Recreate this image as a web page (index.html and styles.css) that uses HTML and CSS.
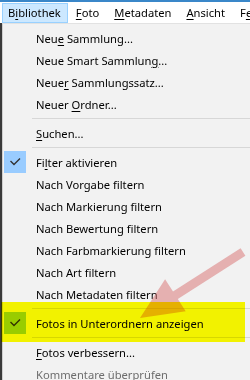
FILE: index.html
```html
<!DOCTYPE html>
<html lang="de">
<head>
    <meta charset="UTF-8">
    <meta name="viewport" content="width=device-width, initial-scale=1.0">
    <title>Bibliothek Menü</title>
    <link rel="stylesheet" href="styles.css">
</head>
<body>
    <div class="titlebar"></div>

    <div class="menubar">
        <div class="menubar-item active">B<u>i</u>bliothek</div>
        <div class="menubar-item"><u>F</u>oto</div>
        <div class="menubar-item"><u>M</u>etadaten</div>
        <div class="menubar-item"><u>A</u>nsicht</div>
        <div class="menubar-item">F<u>e</u></div>
    </div>

    <div class="dropdown">
        <div class="item"><span class="check"></span><span class="label">Neu<u>e</u> Sammlung...</span></div>
        <div class="item"><span class="check"></span><span class="label">Neue Smart Sammlun<u>g</u>...</span></div>
        <div class="item"><span class="check"></span><span class="label">Neue<u>r</u> Sammlungssatz...</span></div>
        <div class="item"><span class="check"></span><span class="label">Neuer <u>O</u>rdner...</span></div>
        <div class="separator"></div>
        <div class="item"><span class="check"></span><span class="label"><u>S</u>uchen...</span></div>
        <div class="separator"></div>
        <div class="item checked">
            <span class="check">
                <span class="check-box">
                    <svg width="22" height="22" viewBox="0 0 22 22"><path d="M6.5 10 L10 13.5 L16 7.5" fill="none" stroke="#333" stroke-width="1.4"/></svg>
                </span>
            </span>
            <span class="label">Fi<u>l</u>ter aktivieren</span>
        </div>
        <div class="item"><span class="check"></span><span class="label">Nach Vorgabe filtern</span></div>
        <div class="item"><span class="check"></span><span class="label">Nach Markierung filtern</span></div>
        <div class="item"><span class="check"></span><span class="label">Nach Bewertung filtern</span></div>
        <div class="item"><span class="check"></span><span class="label">Nach Farbmarkierung filtern</span></div>
        <div class="item"><span class="check"></span><span class="label">Nach Art filtern</span></div>
        <div class="item"><span class="check"></span><span class="label">Nach Metadaten filtern</span></div>
        <div class="separator"></div>
        <div class="item checked">
            <span class="check">
                <span class="check-box">
                    <svg width="22" height="22" viewBox="0 0 22 22"><path d="M6.5 10 L10 13.5 L16 7.5" fill="none" stroke="#333" stroke-width="1.4"/></svg>
                </span>
            </span>
            <span class="label">Fotos in Unterordnern anzeigen</span>
        </div>
        <div class="separator"></div>
        <div class="item"><span class="check"></span><span class="label"><u>F</u>otos verbessern...</span></div>
        <div class="item disabled"><span class="check"></span><span class="label">Kommentare überprüfen</span></div>
    </div>

    <!-- annotation drawn over the screenshot -->
    <svg class="arrow" width="250" height="380" viewBox="0 0 250 380">
        <polygon points="245.4,255.8 177.8,299.1 185.7,311.3 140,318 165.1,279.3 173,291.5 240.6,248.2" fill="rgba(215,110,110,0.5)"/>
    </svg>
    <div class="highlight"></div>
</body>
</html>
```

FILE: styles.css
```css
body {
    font-family: 'Noto Sans', 'Open Sans', sans-serif;
    font-size: 11.2px;
    margin: 0;
    width: 250px;
    height: 380px;
    overflow: hidden;
    background-color: #3a3a3a;
    color: #000;
    position: relative;
}
u {
    text-decoration-thickness: 1px;
    text-underline-offset: 2px;
}
.titlebar {
    height: 2px;
    background-color: #3a87c9;
}
.menubar {
    display: flex;
    align-items: flex-end;
    height: 21px;
    padding-left: 2px;
    background-color: white;
    white-space: nowrap;
    overflow: hidden;
}
.menubar-item {
    display: flex;
    align-items: center;
    height: 17px;
    padding: 0 6px 1px 5px;
    margin-right: 2px;
    border: 1px solid transparent;
}
.menubar-item.active {
    background-color: #cce8ff;
    border-color: #99d1ff;
}
.dropdown {
    margin-left: 2px;
    padding-top: 3px;
    height: 353px;
    overflow: hidden;
    background-color: #f2f2f2;
    border-left: 1px solid #cfcfcf;
    border-top: 1px solid #e2e2e2;
}
.item {
    display: flex;
    align-items: center;
    height: 22px;
    white-space: nowrap;
}
.check {
    display: flex;
    width: 33px;
    height: 22px;
    flex-shrink: 0;
}
.check-box {
    display: block;
    width: 22px;
    height: 22px;
    margin-left: 1px;
    background-color: #99ccff;
}
.check-box svg {
    display: block;
}
.disabled {
    color: #6d6d6d;
}
.separator {
    height: 4px;
    padding-top: 3px;
    margin-left: 29px;
}
.separator::after {
    content: "";
    display: block;
    height: 1px;
    background-color: #d7d7d7;
}
.arrow {
    position: absolute;
    top: 0;
    left: 0;
    pointer-events: none;
}
.highlight {
    position: absolute;
    left: 1px;
    top: 302px;
    width: 244px;
    height: 40px;
    background-color: #ffff00;
    mix-blend-mode: multiply;
    pointer-events: none;
}
```
